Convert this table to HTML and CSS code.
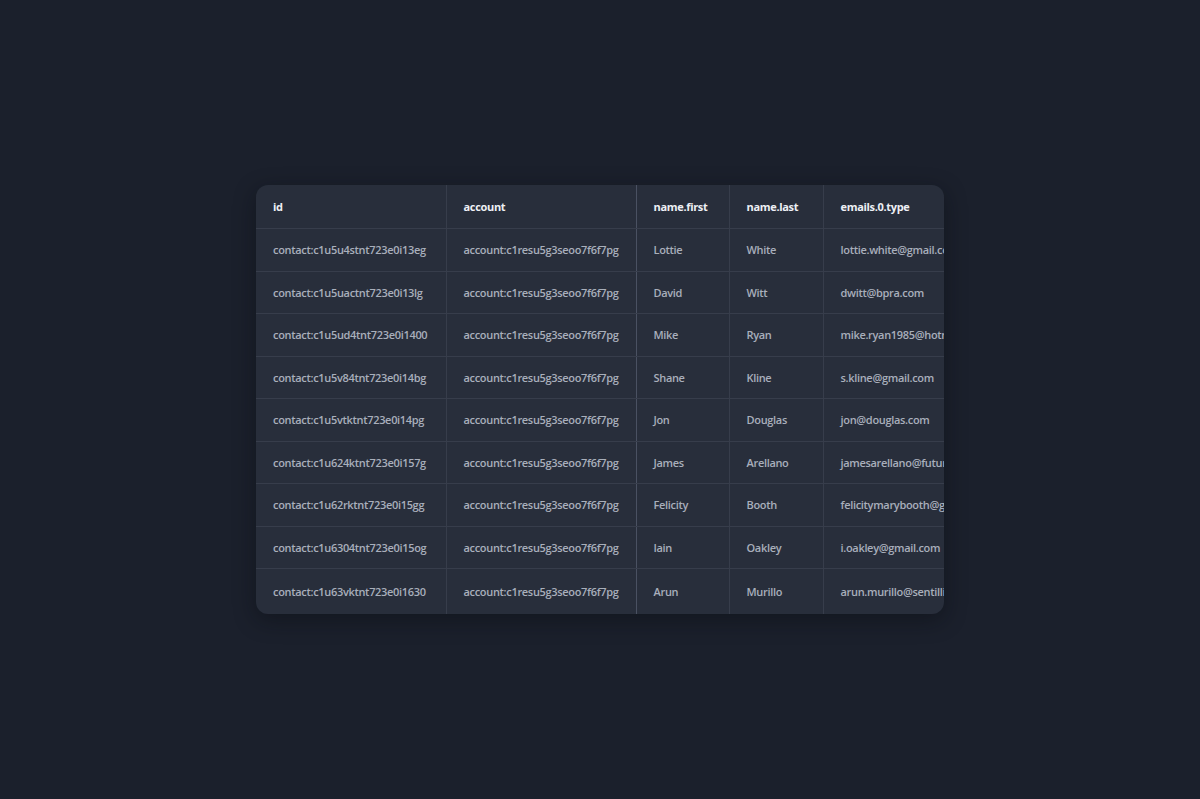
FILE: index.html
```html
<!DOCTYPE html>
<html>
<head>
<meta charset="utf-8">
<link rel="stylesheet" href="styles.css">
</head>
<body>
<div class="page">
  <div class="card">
    <table class="grid">
      <colgroup>
        <col class="c-id"><col class="c-acc"><col class="c-first"><col class="c-last"><col class="c-email">
      </colgroup>
      <thead>
        <tr><th>id</th><th class="sep">account</th><th>name.first</th><th>name.last</th><th>emails.0.type</th></tr>
      </thead>
      <tbody>
        <tr><td>contact:c1u5u4stnt723e0i13eg</td><td class="sep">account:c1resu5g3seoo7f6f7pg</td><td>Lottie</td><td>White</td><td>lottie.white@gmail.com</td></tr>
        <tr><td>contact:c1u5uactnt723e0i13lg</td><td class="sep">account:c1resu5g3seoo7f6f7pg</td><td>David</td><td>Witt</td><td>dwitt@bpra.com</td></tr>
        <tr><td>contact:c1u5ud4tnt723e0i1400</td><td class="sep">account:c1resu5g3seoo7f6f7pg</td><td>Mike</td><td>Ryan</td><td>mike.ryan1985@hotmail.com</td></tr>
        <tr><td>contact:c1u5v84tnt723e0i14bg</td><td class="sep">account:c1resu5g3seoo7f6f7pg</td><td>Shane</td><td>Kline</td><td>s.kline@gmail.com</td></tr>
        <tr><td>contact:c1u5vtktnt723e0i14pg</td><td class="sep">account:c1resu5g3seoo7f6f7pg</td><td>Jon</td><td>Douglas</td><td>jon@douglas.com</td></tr>
        <tr><td>contact:c1u624ktnt723e0i157g</td><td class="sep">account:c1resu5g3seoo7f6f7pg</td><td>James</td><td>Arellano</td><td>jamesarellano@futuremail.com</td></tr>
        <tr><td>contact:c1u62rktnt723e0i15gg</td><td class="sep">account:c1resu5g3seoo7f6f7pg</td><td>Felicity</td><td>Booth</td><td>felicitymarybooth@gmail.com</td></tr>
        <tr><td>contact:c1u6304tnt723e0i15og</td><td class="sep">account:c1resu5g3seoo7f6f7pg</td><td>Iain</td><td>Oakley</td><td>i.oakley@gmail.com</td></tr>
        <tr class="last"><td>contact:c1u63vktnt723e0i1630</td><td class="sep">account:c1resu5g3seoo7f6f7pg</td><td>Arun</td><td>Murillo</td><td>arun.murillo@sentillion.com</td></tr>
      </tbody>
    </table>
  </div>
</div>
</body>
</html>
```

FILE: styles.css
```css
html, body {
  margin: 0;
  padding: 0;
  background: #1b202c;
}
.page {
  width: 1200px;
  height: 799px;
  display: flex;
  align-items: center;
  justify-content: center;
  font-family: "Open Sans", "Noto Sans", sans-serif;
}
.card {
  width: 688px;
  height: 429px;
  background: #282e3b;
  border-radius: 12px;
  overflow: hidden;
  box-shadow: 0 6px 22px rgba(8, 10, 16, 0.45);
}
.grid {
  border-collapse: collapse;
  table-layout: fixed;
  width: 880px;
}
.c-id { width: 190px; }
.c-acc { width: 190px; }
.c-first { width: 93px; }
.c-last { width: 94px; }
.c-email { width: 313px; }
.grid th, .grid td {
  text-align: left;
  padding: 0 0 0 17px;
  white-space: nowrap;
  overflow: hidden;
  border-right: 1px solid #373d4b;
  border-bottom: 1px solid #373d4b;
  font-size: 11px;
  letter-spacing: -0.32px;
}
.grid th {
  height: 43px;
  color: #eef0f5;
  font-weight: 700;
}
.grid td {
  height: 41.5px;
  color: #a9afbb;
  font-weight: 600;
}
.grid .sep {
  border-right: 1px solid #4a5162;
}
.grid tr.last td {
  height: 45px;
  border-bottom: none;
}
```
